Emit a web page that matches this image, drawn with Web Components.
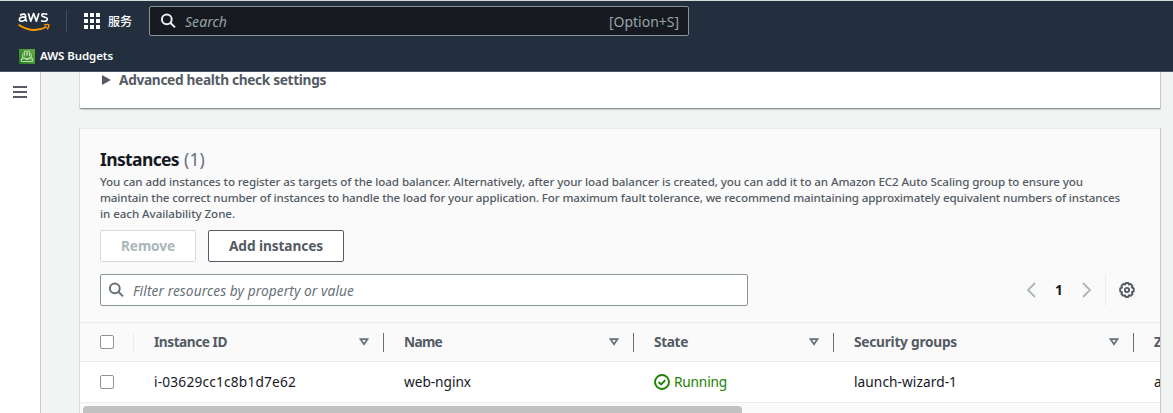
<!DOCTYPE html>
<html lang="en"><head><meta charset="utf-8"><title>AWS Console</title>
<style>
body{margin:0;height:413px;overflow:hidden;background:#f2f3f3;font-family:"Noto Sans","Noto Sans CJK SC",sans-serif;font-size:13.7px;color:#16191f}
</style></head><body><console-app></console-app>
<script>
const define=(name,html,after)=>customElements.define(name,class extends HTMLElement{
  connectedCallback(){if(this.shadowRoot)return;const t=document.createElement('template');t.innerHTML=html;
    this.attachShadow({mode:'open'}).append(t.content.cloneNode(true));if(after)after(this,this.shadowRoot);}
});

/* Text run tracked to a given width: w = width, s = font size. */
define('fit-text','<style>:host{display:inline-block;white-space:pre;line-height:20px}span{display:inline-block}</style><span><slot></slot></span>',(h,r)=>{
  const s=r.querySelector('span');
  if(h.getAttribute('s'))h.style.fontSize=h.getAttribute('s')+'px';
  const w=+h.getAttribute('w'),n=[...h.textContent].length;
  if(w){const m=s.getBoundingClientRect().width;s.style.letterSpacing=((w-m)/n)+'px';h.style.width=w+'px';}
});

const icons={
 search:'<svg width="16" height="16" viewBox="0 0 16 16" fill="none" stroke="currentColor" stroke-width="2"><circle cx="5.8" cy="6.3" r="4.9"/><path d="M9.3 9.8l4.7 4.6"/></svg>',
 menu:'<svg width="16" height="16" viewBox="0 0 16 16" fill="none" stroke="currentColor" stroke-width="2"><path d="M1 3h14M1 8h14M1 13h14"/></svg>',
 grid:'<svg width="16" height="16" viewBox="0 0 16 16" fill="currentColor"><path d="M0 0h4v4H0zM6 0h4v4H6zM12 0h4v4h-4zM0 6h4v4H0zM6 6h4v4H6zM12 6h4v4h-4zM0 12h4v4H0zM6 12h4v4H6zM12 12h4v4h-4z"/></svg>',
 sort:'<svg width="10" height="8" viewBox="0 0 10 8" fill="none" stroke="currentColor" stroke-width="1.8" stroke-linejoin="miter"><path d="M1.6 1.2h6.8L5 6.2z"/></svg>',
 prev:'<svg width="16" height="16" viewBox="0 0 16 16" fill="none" stroke="currentColor" stroke-width="1.8"><path d="M12 1L5 8l7 7"/></svg>',
 next:'<svg width="16" height="16" viewBox="0 0 16 16" fill="none" stroke="currentColor" stroke-width="1.8"><path d="M4 1l7 7-7 7"/></svg>',
 check:'<svg width="16" height="16" viewBox="0 0 16 16" fill="none" stroke="currentColor" stroke-width="1.9"><circle cx="8" cy="8" r="7"/><path d="M4.6 8l2.5 2.4 4.2-4.3"/></svg>',
 caret:'<svg width="9" height="10" viewBox="0 0 9 10" fill="currentColor"><path d="M0 0L9 5l-9 5z"/></svg>',
 gear:'<svg width="16" height="16" viewBox="0 0 16 16" fill="none" stroke="currentColor" stroke-width="1.9" stroke-linejoin="round"><path d="M6.7 1h2.6l.7 1.6 1.6-.7 1.9 1.9-.7 1.6 1.9.9v3.1l-1.8.8.6 1.8-1.8 1.8-1.8-.6-.8 1.8H6.7L6 13.3l-1.7.6-1.9-1.9.7-1.7-1.9-.9V6.3l1.9-.8-.7-1.7 1.9-1.9 1.7.7z"/><circle cx="8" cy="8" r="2.1"/></svg>',
 aws:'<svg width="32" height="20" viewBox="0 0 32 20" fill="none"><g stroke="#fff" stroke-width="1.7" stroke-linejoin="round"><path d="M2 3.1Q7.6 .6 7.6 4.2V7.5L8.8 9.7M7.6 5.3Q1.4 4.4 1.4 7.2Q1.4 9.6 4.2 9.2Q6.8 8.9 7.6 7M10.3 1.3L12.8 9.2L15.6 1.5L18.4 9.2L20.9 1.3"/><path d="M29.3 2.4Q23.5 .7 23.8 3.4Q24 4.6 26.7 5.2Q29.8 6 29.2 7.8Q28.2 10.2 23 8.7"/></g><path d="M.5 12.7Q15 22.2 28.7 14.7" stroke="#f90" stroke-width="1.8"/><path d="M26 13.1Q30.2 11.8 30.8 12.8Q31.1 14.4 29.2 17.4" stroke="#f90" stroke-width="1.5"/></svg>',
 budget:'<svg width="16" height="16" viewBox="0 0 16 16"><defs><linearGradient id="g" x1="0" y1="1" x2="1" y2="0"><stop stop-color="#247b24"/><stop offset="1" stop-color="#62ad3c"/></linearGradient></defs><path fill="url(#g)" d="M0 1h16v15H0z"/><g fill="none" stroke="#dcefd7" stroke-width=".8"><path d="M5.4 8.4V3.2h5.2v5.2M5 5.2L3.6 6.8v2.4l3 1.3h2.8l3-1.3V6.8L11 5.2M3.6 9.4l-1.3 1.5v2.6h11.4v-2.6l-1.3-1.5M2.5 11.2l3.3-.6L8 12l2.2-1.4 3.3.6M8 4.3v3M7.2 5h1.6M7.2 6.8h1.6"/></g></svg>'
};
define('ui-icon','<style>:host{display:inline-flex;flex:none}svg{display:block}</style>',(h,r)=>{const t=document.createElement('template');t.innerHTML=icons[h.getAttribute('name')];r.append(t.content)});

define('search-box',`<style>
:host{display:flex;box-sizing:border-box;align-items:center;border:1px solid #879596;border-radius:2px;color:#687078;background:#fff;height:32px;width:648px;padding:0 8px;gap:8px;font-style:italic}
:host([dark]){background:#16191f;width:540px;height:30px;padding:0 9px 0 11px;gap:8px;color:#95a5a6}
ui-icon{color:#687078}:host([dark]) ui-icon{color:#eaeded}
::slotted(fit-text){padding-top:2px}
.s{flex:1}.hint{font-style:normal}</style>
<ui-icon name="search"></ui-icon><slot></slot><span class="s"></span><span class="hint"><slot name="hint"></slot></span>`);

define('top-nav',`<style>
:host{display:flex;flex-direction:column;box-sizing:border-box;height:72px;background:#232f3e;border-top:1px solid #d5dbdb;border-bottom:1px solid #4c5663;color:#fff;flex:none;position:relative;z-index:1}
.top{display:flex;height:40px;align-items:center;padding-left:18px}
.aws{margin-top:1px}.sep{width:1px;height:22px;background:#414d5c;margin:0 17px 0 16px}
.svc{margin:0 17px 0 8px;font-weight:500;font-family:"Noto Sans CJK SC",sans-serif}
.fav{display:flex;height:30px;align-items:center;padding-left:19px;gap:5px;font-weight:600}
</style><div class="top"><ui-icon class="aws" name="aws"></ui-icon><span class="sep"></span><ui-icon name="grid"></ui-icon><fit-text class="svc" s="12" w="24">服务</fit-text>
<search-box dark><fit-text s="14" w="42">Search</fit-text><fit-text slot="hint" s="14" w="70">[Option+S]</fit-text></search-box></div>
<div class="fav"><ui-icon name="budget"></ui-icon><fit-text s="11.5" w="73">AWS Budgets</fit-text></div>`);

define('side-rail',`<style>:host{display:block;box-sizing:border-box;width:41px;background:#fff;border-right:1px solid #c8cccc;padding:12px 0 0 12px;color:#545b64;flex:none}</style><ui-icon name="menu"></ui-icon>`);

define('ui-button',`<style>:host{display:inline-flex;box-sizing:border-box;height:32px;align-items:center;padding:0 20px;border:1px solid #545b64;border-radius:2px;background:#fff;color:#545b64;font-weight:700}:host([disabled]){border-color:#d5dbdb;color:#aab7b8}</style><slot></slot>`);

define('check-box',`<style>:host{display:block;box-sizing:border-box;width:14px;height:14px;border:1px solid #879596;border-radius:2px;background:#fff;flex:none}</style>`);

define('head-cell',`<style>:host{display:flex;flex:none;box-sizing:border-box;align-items:center;justify-content:space-between;height:19px;padding:0 14px 0 20px;border-right:1px solid #687078;color:#545b64;font-weight:700}ui-icon{color:#687078}</style><slot></slot><ui-icon name="sort"></ui-icon>`);

define('page-nav',`<style>:host{display:flex;align-items:center;height:32px;color:#aab7b8}b{margin:0 17px 0 16px;color:#16191f;width:7px;text-align:center}.line{width:1px;height:32px;background:#eaeded;margin:0 13px 0 10px}.gear{color:#545b64}</style><ui-icon name="prev"></ui-icon><b><fit-text w="7" s="13.7">1</fit-text></b><ui-icon name="next"></ui-icon><span class="line"></span><ui-icon class="gear" name="gear"></ui-icon>`);

define('instance-table',`<style>
:host{display:block}
.row{display:flex;align-items:center;box-sizing:border-box;padding-left:20px;overflow:hidden;border-top:1px solid #eaeded}
.head{height:39px;background:#fafafa}.body{height:42px;background:#fff;border-bottom:1px solid #eaeded}
.line{width:1px;height:19px;background:#eaeded;margin-left:19px;flex:none}
.cell{flex:none;box-sizing:border-box;padding-left:20px;display:flex;align-items:center}
.id{width:250px}.name{width:250px}.state{width:200px;color:#1d8102;gap:4px}.sg{width:300px}
.body .line{background:transparent}
.scroll{height:11px;background:#fafafa;padding:3px 0 0 3px;box-sizing:border-box}.thumb{width:659px;height:10px;border-radius:4px;background:#c1c1c1}
</style>
<div class="row head"><check-box></check-box><span class="line"></span>
<head-cell class="id"><fit-text w="73">Instance ID</fit-text></head-cell><head-cell class="name"><fit-text w="38">Name</fit-text></head-cell><head-cell class="state" style="color:#545b64"><fit-text w="34">State</fit-text></head-cell><head-cell class="sg"><fit-text w="103">Security groups</fit-text></head-cell><head-cell><fit-text w="8">Z</fit-text></head-cell></div>
<div class="row body"><check-box></check-box><span class="line"></span>
<span class="cell id"><fit-text w="142">i-03629cc1c8b1d7e62</fit-text></span><span class="cell name"><fit-text w="67">web-nginx</fit-text></span><span class="cell state"><ui-icon name="check"></ui-icon><fit-text w="53">Running</fit-text></span><span class="cell sg"><fit-text w="103">launch-wizard-1</fit-text></span><span class="cell"><fit-text w="7">a</fit-text></span></div>
<div class="scroll"><div class="thumb"></div></div>`);

define('ui-card',`<style>:host{display:block;box-sizing:border-box;width:1080px;background:#fafafa;box-shadow:-1px 0 0 #d5d9d9,1px 0 0 #c6caca,1px 1px 1px #ccd1d1;overflow:clip;overflow-clip-margin:2px}</style><slot></slot>`);

define('instances-panel',`<style>
:host{display:block}.inner{padding:19px 20px 16px;display:flex;flex-direction:column;height:193px;box-sizing:border-box}
.title{display:flex;gap:5px;height:22px;align-items:center;font-weight:700}.count{font-weight:400;color:#687078}
.desc{display:flex;flex-direction:column;color:#545b64;margin-top:4px;font-weight:500}.desc fit-text{line-height:16px;height:16px}
.buttons{display:flex;gap:12px;margin-top:8px}.filter{display:flex;justify-content:space-between;margin-top:12px;padding-right:5px}
</style><div class="inner"><div class="title"><fit-text s="17.5" w="79">Instances</fit-text><fit-text class="count" s="17.5" w="21">(1)</fit-text></div>
<div class="desc"><fit-text s="11.6" w="983">You can add instances to register as targets of the load balancer. Alternatively, after your load balancer is created, you can add it to an Amazon EC2 Auto Scaling group to ensure you</fit-text><fit-text s="11.6" w="1020">maintain the correct number of instances to handle the load for your application. For maximum fault tolerance, we recommend maintaining approximately equivalent numbers of instances</fit-text><fit-text s="11.6" w="135">in each Availability Zone.</fit-text></div>
<div class="buttons"><ui-button disabled><fit-text w="54">Remove</fit-text></ui-button><ui-button><fit-text w="94">Add instances</fit-text></ui-button></div>
<div class="filter"><search-box><fit-text w="221">Filter resources by property or value</fit-text></search-box><page-nav></page-nav></div></div><instance-table></instance-table>`);

define('console-app',`<style>
:host{display:flex;flex-direction:column;height:413px;overflow:hidden}.main{display:flex;flex:1;min-height:0}.content{padding-left:39px}
.health{height:37px;background:#fff;border-bottom:1px solid #879596;margin-bottom:19px}
.health div{display:flex;align-items:center;gap:8px;padding-left:22px;height:16px;font-weight:700;color:#545b64}
.inst{height:285px;border-top:1px solid #eaeded}
</style><top-nav></top-nav><div class="main"><side-rail></side-rail><div class="content">
<ui-card class="health"><div><ui-icon name="caret"></ui-icon><fit-text w="207">Advanced health check settings</fit-text></div></ui-card>
<ui-card class="inst"><instances-panel></instances-panel></ui-card></div></div>`);
</script></body></html>
